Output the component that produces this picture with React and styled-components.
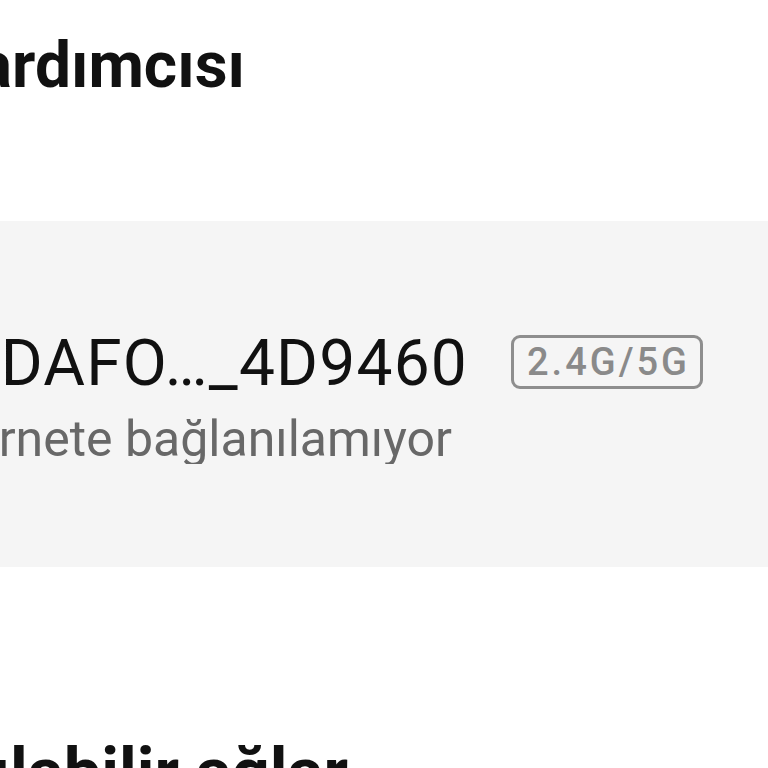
import React from 'react'
import styled, { createGlobalStyle } from 'styled-components'

const GlobalStyle = createGlobalStyle`
  html, body {
    margin: 0;
    padding: 0;
    background: #ffffff;
    overflow: hidden;
  }
  body {
    font-family: Roboto, "Noto Sans", "Liberation Sans", sans-serif;
  }
`

const Screen = styled.div`
  width: 768px;
  height: 768px;
  overflow: hidden;
  background: #ffffff;
  display: flex;
  flex-direction: column;
`

// keeps the right end of a line in place and clips whatever runs off the left
const Clip = styled.div`
  width: ${p => p.$w}px;
  flex: none;
  display: flex;
  justify-content: flex-end;
  overflow: hidden;
  white-space: nowrap;
`

const Header = styled.header`
  height: 221px;
  flex: none;
  padding-top: 34px;
  box-sizing: border-box;
`

const Title = styled.h1`
  margin: 0;
  font-size: 64px;
  line-height: 64px;
  font-weight: 700;
  color: #111111;
`

const Panel = styled.section`
  height: 346px;
  flex: none;
  background: #f5f5f5;
  padding-top: 111px;
  box-sizing: border-box;
`

const NetworkRow = styled.div`
  display: flex;
  align-items: center;
  gap: 43px;
`

const Ssid = styled.span`
  font-size: 64px;
  line-height: 64px;
  letter-spacing: 1.2px;
  font-weight: 400;
  color: #111111;
`

const Band = styled.span`
  flex: none;
  height: 54px;
  box-sizing: border-box;
  padding: 0 10px 0 13px;
  border: 3px solid #8e8e8e;
  border-radius: 9px;
  display: flex;
  align-items: center;
  font-size: 38px;
  letter-spacing: 3px;
  font-weight: 500;
  color: #8a8a8a;
  margin-top: -4px;
`

const Status = styled.span`
  margin-top: 18px;
  font-size: 50px;
  line-height: 50px;
  color: #686868;
`

const SectionTitle = styled.h2`
  margin: 172px 0 0;
  font-size: 67px;
  line-height: 67px;
  font-weight: 700;
  color: #111111;
`

const App = () => (
  <>
    <GlobalStyle />
    <Screen>
      <Header>
        <Clip $w={245}>
          <Title>Wi-Fi yardımcısı</Title>
        </Clip>
      </Header>
      <Panel>
        <NetworkRow>
          <Clip $w={468}>
            <Ssid>VODAFO…_4D9460</Ssid>
          </Clip>
          <Band>2.4G/5G</Band>
        </NetworkRow>
        <Clip $w={452}>
          <Status>İnternete bağlanılamıyor</Status>
        </Clip>
      </Panel>
      <Clip $w={348}>
        <SectionTitle>Kullanılabilir ağlar</SectionTitle>
      </Clip>
    </Screen>
  </>
)

export default App
